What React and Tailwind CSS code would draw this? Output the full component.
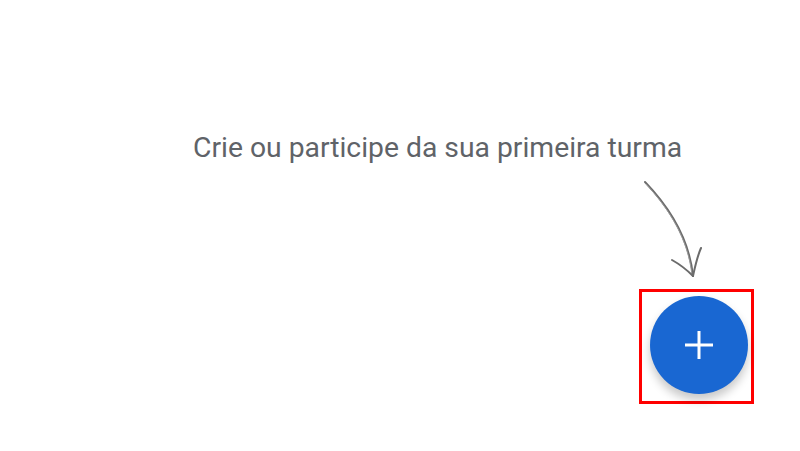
import React from "react";

function HandArrow() {
  return (
    <svg width="115" height="125" viewBox="0 0 115 125" fill="none" className="block">
      <path
        d="M6 18 C 30 43, 50 73, 54 112"
        stroke="#6b6b6b"
        strokeWidth="2"
        strokeLinecap="round"
      />
      <path
        d="M7 20 C 31 46, 49 75, 53 111"
        stroke="#9a9a9a"
        strokeWidth="1"
        strokeLinecap="round"
      />
      <path
        d="M33 96 C 42 101, 48 106, 54 112"
        stroke="#6b6b6b"
        strokeWidth="2"
        strokeLinecap="round"
      />
      <path
        d="M62 84 C 58 93, 56 103, 54 112"
        stroke="#6b6b6b"
        strokeWidth="2"
        strokeLinecap="round"
      />
    </svg>
  );
}

export default function App() {
  return (
    <div
      className="w-[800px] h-[451px] bg-white flex flex-col overflow-hidden"
      style={{ fontFamily: "Roboto, 'Noto Sans', sans-serif" }}
    >
      <p className="pt-[132px] pl-[193px] text-[28.3px] leading-[32px] text-[#5f6368] whitespace-nowrap">
        Crie ou participe da sua primeira turma
      </p>
      <div className="flex justify-end pr-[46px]">
        <div className="flex flex-col w-[115px]">
          <HandArrow />
          <div className="w-[115px] h-[115px] border-[3px] border-[#ff0000] flex items-center justify-center pl-[5px] pb-[3px]">
            <button className="w-[98px] h-[98px] rounded-full bg-[#1967d2] flex items-center justify-center shadow-[0_6px_10px_rgba(0,0,0,0.22)]">
              <svg width="30" height="30" viewBox="0 0 30 30">
                <path d="M15 1 V29 M1 15 H29" stroke="#ffffff" strokeWidth="3" />
              </svg>
            </button>
          </div>
        </div>
      </div>
    </div>
  );
}
